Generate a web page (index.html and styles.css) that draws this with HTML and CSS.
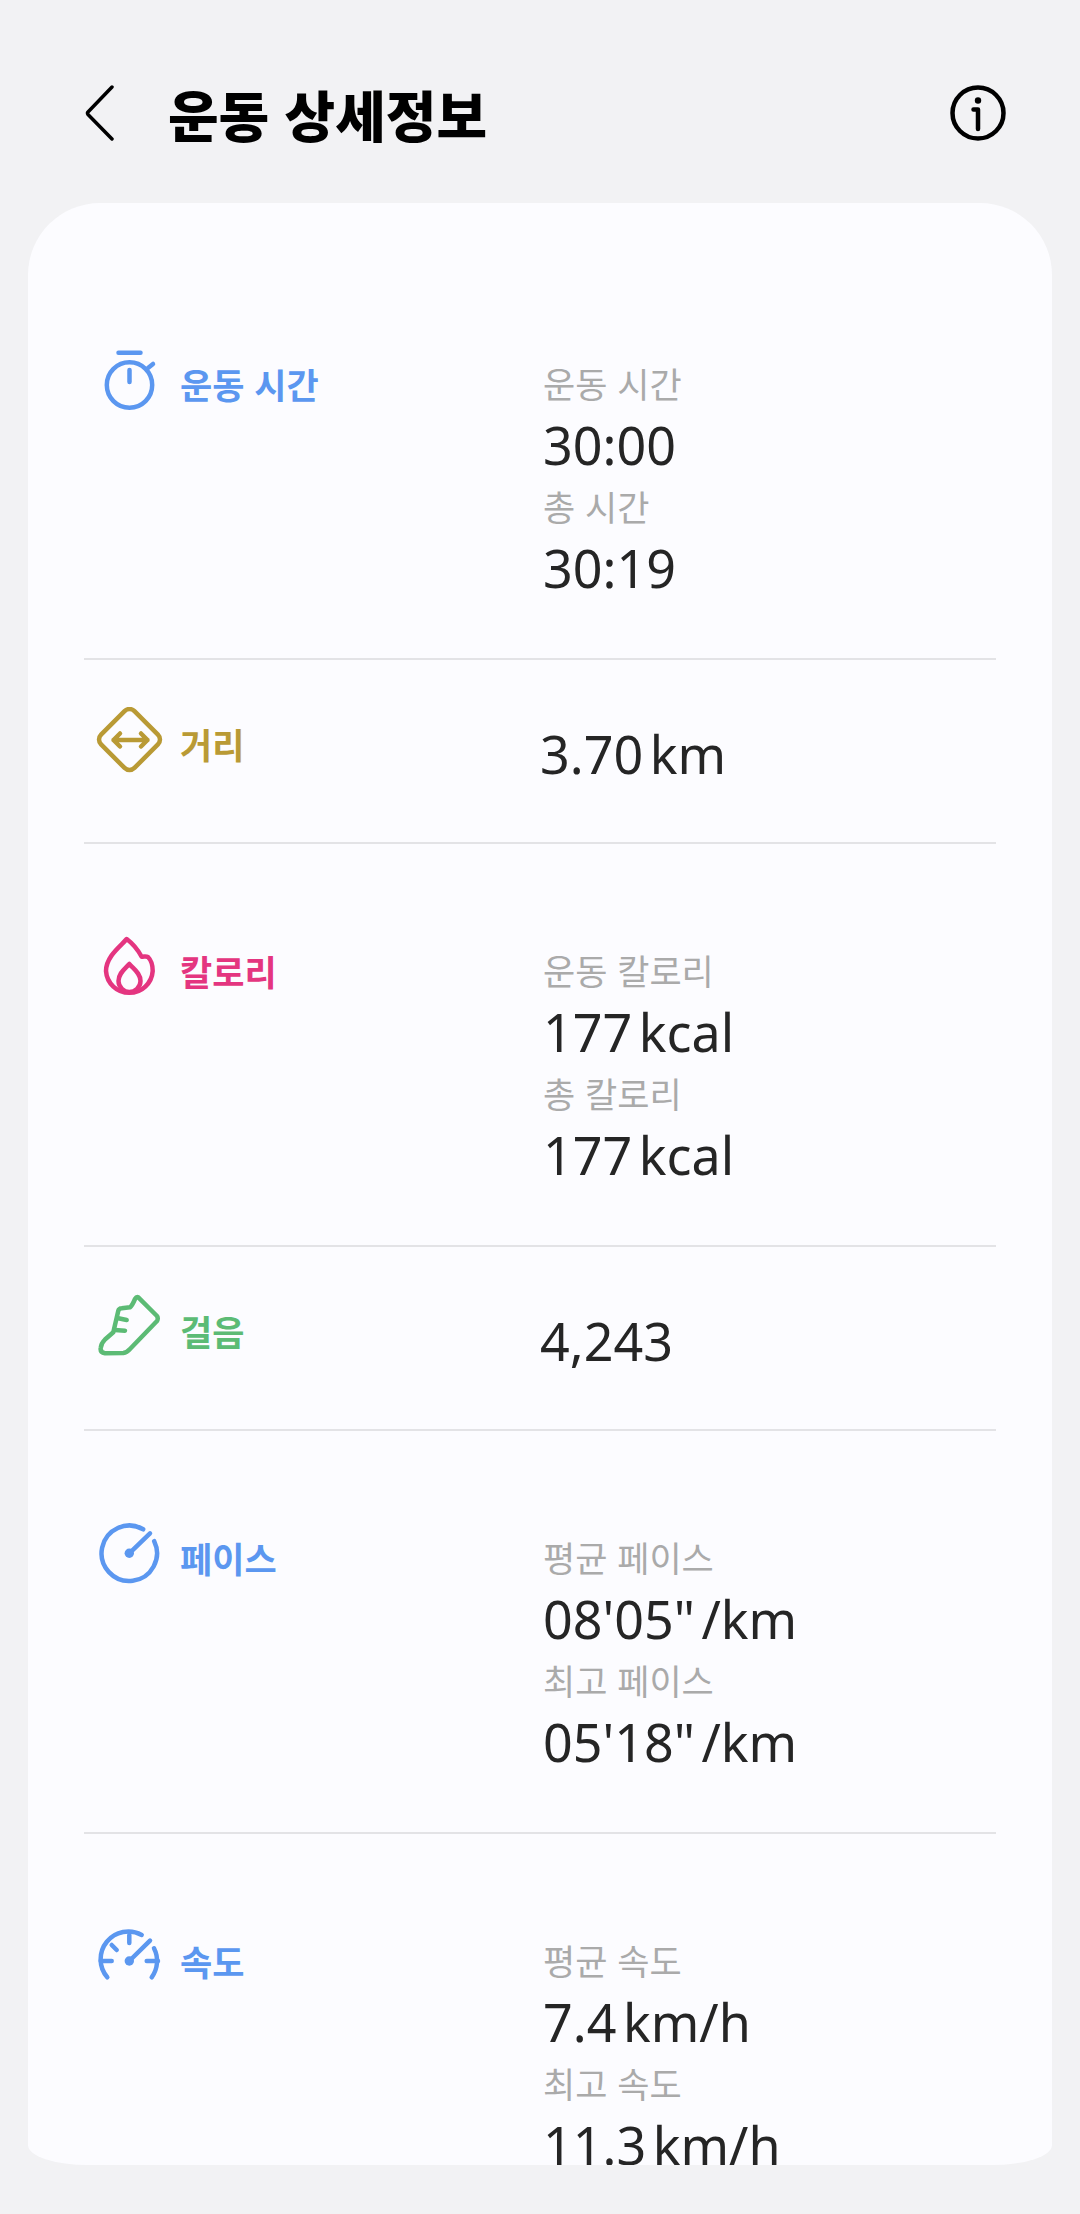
FILE: index.html
```html
<!DOCTYPE html>
<html lang="ko">
<head>
<meta charset="utf-8" />
<title>운동 상세정보</title>
<meta name="viewport" content="width=device-width, initial-scale=1" />
<link rel="stylesheet" href="styles.css">
</head>
<body>

<!-- header -->
<div class="header">
  <svg class="back" viewBox="0 0 32 56"><path d="M28 2 L4 27 Q3 28 4 29.500 L28 54" /></svg>
  <div class="pagetitle">운동 상세정보</div>
  <svg class="info" viewBox="0 0 56 56">
    <circle cx="28" cy="28" r="25.500" />
    <circle class="fill" cx="28" cy="15.500" r="3.200" />
    <path d="M23.500 24.500 H28 V44" />
  </svg>
</div>

<!-- card -->
<div class="card">

  <div class="metric double">
    <div class="head blue">
      <svg class="icon" viewBox="0 0 72 72">
        <circle cx="35.500" cy="38" r="22.700" />
        <path d="M24.500 5.700 H46.500 M35.500 23 V35 M54 21 L59 17" />
      </svg>
      <span>운동 시간</span>
    </div>
    <div class="values">
      <div class="label">운동 시간</div>
      <div class="value">30:00</div>
      <div class="label">총 시간</div>
      <div class="value">30:19</div>
    </div>
  </div>

  <div class="metric single">
    <div class="head gold">
      <svg class="icon" viewBox="0 0 72 72">
        <rect x="11.900" y="8.900" width="47.200" height="47.200" rx="7" transform="rotate(45 35.500 32.500)" />
        <path d="M19.500 33 H53.500 M26 26.500 L19.500 33 L26 39.500 M47 26.500 L53.500 33 L47 39.500" />
      </svg>
      <span>거리</span>
    </div>
    <div class="values">
      <div class="value">3.70 km</div>
    </div>
  </div>

  <div class="metric double">
    <div class="head pink">
      <svg class="icon" viewBox="0 0 72 72">
        <path d="M32.700 5 C28 11 12 22 12 37 A23.400 23.400 0 0 0 58.700 37 C58.700 31 57 26 54 23 C52 22 49 23 47.500 22.500 C44 16 38 9 32.700 5 Z" />
        <path d="M35.300 30 C31 35 24.500 39 24.500 47 C24.500 53 30 58 35.300 58 C41 58 46.500 53 46.500 47 C46.500 39 39.500 35 35.300 30 Z" />
      </svg>
      <span>칼로리</span>
    </div>
    <div class="values">
      <div class="label">운동 칼로리</div>
      <div class="value">177 kcal</div>
      <div class="label">총 칼로리</div>
      <div class="value">177 kcal</div>
    </div>
  </div>

  <div class="metric single">
    <div class="head green">
      <svg class="icon" viewBox="0 0 72 72">
        <path d="M44.300 3.300 L63 22 Q64.500 24.500 63 27 L36 55 Q33 58.500 29.300 59 L11 59.300 Q6 58.500 6.700 54 Q7 49.500 11 45.500 L19.300 38.300 L24.300 16.700 Q25 14.500 27.700 14.300 L36 13.300 Q38 12 41 5 Q42.500 2.500 44.300 3.300 Z" />
        <path d="M24.300 24.300 L32.700 26 M21 36 L31 36.700" />
      </svg>
      <span>걸음</span>
    </div>
    <div class="values">
      <div class="value">4,243</div>
    </div>
  </div>

  <div class="metric double">
    <div class="head blue">
      <svg class="icon" viewBox="0 0 72 72">
        <path d="M60.200 20.200 A27.700 27.700 0 1 1 49.150 8.300" />
        <path d="M35.300 32.300 L56 12.300" />
        <circle class="fill" cx="35.300" cy="32.300" r="4.700" />
      </svg>
      <span>페이스</span>
    </div>
    <div class="values">
      <div class="label">평균 페이스</div>
      <div class="value">08'05" /km</div>
      <div class="label">최고 페이스</div>
      <div class="value">05'18" /km</div>
    </div>
  </div>

  <div class="metric double last">
    <div class="head blue">
      <svg class="icon" viewBox="0 0 72 72">
        <path d="M13.300 53.300 A27.700 27.700 0 0 1 47.700 11 M60 24.300 A27.700 27.700 0 0 1 57.700 53.300" />
        <path d="M35.300 11 V19 M17.700 21 L22.700 26 M6.700 37 H17.700 M52.700 37 H64 M35.300 37 L56 16.700" />
        <circle class="fill" cx="35.300" cy="37" r="4.700" />
      </svg>
      <span>속도</span>
    </div>
    <div class="values">
      <div class="label">평균 속도</div>
      <div class="value">7.4 km/h</div>
      <div class="label">최고 속도</div>
      <div class="value">11.3 km/h</div>
    </div>
  </div>

</div> <!-- card -->

</body>
</html>
```

FILE: styles.css
```css
html, body {
	margin: 0;
	height: 2214px;
	overflow: hidden;
}

body {
	background: #f2f2f4;
	color: #252525;
	font-family: "Noto Sans", "Noto Sans CJK KR", sans-serif;
}

svg {
	fill: none;
	stroke-linecap: round;
	stroke-linejoin: round;
	flex: none;
}

svg .fill {
	fill: currentColor;
	stroke: none;
}

.header {
	display: flex;
	align-items: center;
	height: 72px;
	padding: 77px 74px 54px 84px;
}

.back {
	width: 32px;
	height: 56px;
	stroke: #000;
	stroke-width: 3.500;
}

.pagetitle {
	flex: 1;
	margin-left: 52px;
	font-family: "Noto Sans CJK KR", sans-serif;
	font-size: 55px;
	font-weight: 900;
	line-height: 72px;
	color: #000;
}

.info {
	width: 56px;
	height: 56px;
	color: #000;
	stroke: #000;
	stroke-width: 4.500;
}

.card {
	height: 1908px;
	margin: 0 28px;
	padding: 54px 56px 0;
	overflow: hidden;
	background: #fcfcff;
	border-radius: 72px 72px 60px 60px / 72px 72px 20px 20px;
}

.metric {
	display: flex;
	box-sizing: border-box;
	padding-left: 10px;
	border-bottom: 2px solid #e3e3e6;
}

.metric.double {
	height: 403px;
}

.metric.single {
	height: 184px;
}

.metric.last {
	border-bottom: none;
}

.head {
	display: flex;
	align-items: center;
	align-self: flex-start;
	gap: 14px;
	width: 449px;
	font-family: "Noto Sans CJK KR", sans-serif;
	font-size: 35px;
	font-weight: 700;
}

.double .head {
	margin-top: 90px;
}

.single .head {
	margin-top: 47px;
}

.icon {
	width: 72px;
	height: 72px;
	stroke: currentColor;
	stroke-width: 4.500;
}

.blue { color: #5b97f0; }
.gold { color: #b99a35; }
.pink { color: #e43580; }
.green { color: #5cbb75; }

.double .values {
	padding-top: 98px;
}

.single .values {
	padding-top: 60px;
	margin-left: -3px;
}

.label {
	font-family: "Noto Sans CJK KR", sans-serif;
	font-size: 35px;
	line-height: 56px;
	color: #aaa;
}

.value {
	font-size: 52px;
	line-height: 67px;
	word-spacing: -7px;
}
```
